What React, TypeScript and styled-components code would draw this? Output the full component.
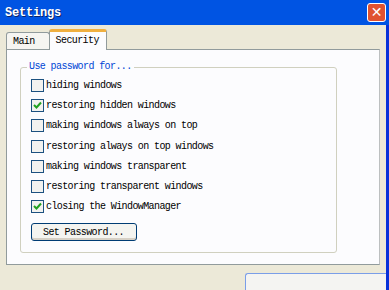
import React from "react";
import styled, { createGlobalStyle } from "styled-components";

const Global = createGlobalStyle`
  html, body { margin: 0; padding: 0; background-color: #ece9d8; }
`;

const Window = styled.div`
  width: 389px;
  height: 290px;
  display: flex;
  flex-direction: column;
  font-family: "Liberation Mono", monospace;
`;

const TitleBar = styled.header`
  height: 25px;
  flex: none;
  display: flex;
  align-items: center;
  justify-content: space-between;
  padding: 0 3px 0 5px;
  box-sizing: border-box;
  background-color: rgb(0, 84, 227);
  color: #ffffff;
`;

const Title = styled.span`
  font-weight: bold;
  font-size: 12px;
  letter-spacing: -0.2px;
  color: #ffffff;
  text-shadow: 1px 1px 0 #0a246a;
`;

const CloseButton = styled.div`
  width: 19px;
  height: 19px;
  border: 1px solid #ffffff;
  border-radius: 3px;
  background-color: rgb(224, 82, 48);
  color: #ffffff;
  font-family: "DejaVu Sans", sans-serif;
  font-size: 14px;
  font-weight: bold;
  line-height: 17px;
  text-align: center;
  box-sizing: border-box;
`;

const Main = styled.div`
  flex: 1;
  display: flex;
  border-right: 3px solid rgb(8, 49, 217);
`;

const Body = styled.div`
  flex: 1;
  display: flex;
  flex-direction: column;
  padding: 3px 0 0 6px;
`;

const TabRow = styled.div`
  display: flex;
  align-items: flex-end;
  height: 21px;
`;

const Tab = styled.div<{ $active?: boolean }>`
  font-size: 10px;
  letter-spacing: -0.6px;
  color: #000;
  box-sizing: border-box;
  display: flex;
  align-items: center;
  border: 1px solid #919b9c;
  border-bottom: none;
  border-radius: 3px 3px 0 0;
  height: ${({ $active }) => ($active ? "21px" : "17px")};
  padding: ${({ $active }) => ($active ? "0 7px 2px 6px" : "0 14px 0 6px")};
  background-color: ${({ $active }) => ($active ? "#fcfcfe" : "#f6f5f1")};
  border-top: ${({ $active }) => ($active ? "3px solid #f0b040" : "1px solid #919b9c")};
  margin-bottom: ${({ $active }) => ($active ? "-1px" : "0")};
  margin-right: ${({ $active }) => ($active ? "0" : "-1px")};
  position: relative;
  z-index: ${({ $active }) => ($active ? 1 : 0)};
`;

const Panel = styled.div`
  width: 374px;
  height: 216px;
  box-sizing: border-box;
  border: 1px solid #919b9c;
  border-right-color: #bcbfc0;
  background-color: #fcfcfe;
  padding: 17px 0 0 13px;
`;

const Group = styled.div`
  position: relative;
  width: 317px;
  height: 186px;
  box-sizing: border-box;
  border: 1px solid #d0d0bf;
  border-radius: 3px;
  padding: 7px 0 0 10px;
  display: flex;
  flex-direction: column;
`;

const Legend = styled.span`
  position: absolute;
  top: -7px;
  left: 6px;
  background-color: #fcfcfe;
  color: #0046d5;
  font-size: 10px;
  line-height: 12px;
  letter-spacing: -0.6px;
  padding: 0 2px;
`;

const Row = styled.div`
  display: flex;
  align-items: center;
  gap: 2px;
  height: 20.3px;
  font-size: 10px;
  letter-spacing: -0.6px;
  color: #000;
`;

const Box = styled.span`
  width: 13px;
  height: 13px;
  box-sizing: border-box;
  border: 1px solid #1c5180;
  background-color: #f2f2ef;
  display: flex;
  align-items: center;
  justify-content: center;
  flex: none;
`;

const Button = styled.div`
  margin-top: 6px;
  width: 106px;
  height: 18px;
  box-sizing: border-box;
  border: 1px solid #003c74;
  border-radius: 3px;
  background-color: #f4f4f0;
  box-shadow: inset 0 -2px 0 #d6d0c5;
  font-size: 10px;
  letter-spacing: -0.6px;
  display: flex;
  align-items: center;
  padding-left: 11px;
`;

const Footer = styled.div`
  flex: 1;
  display: flex;
  justify-content: flex-end;
  padding: 8px 0 0 0;
`;

const OkButton = styled.div`
  width: 140px;
  height: 20px;
  border: 1px solid #7a9ee8;
  border-bottom: none;
  border-right: none;
  border-radius: 3px 0 0 0;
  background-color: #f4f4f2;
`;

const items: [string, boolean][] = [
  ["hiding windows", false],
  ["restoring hidden windows", true],
  ["making windows always on top", false],
  ["restoring always on top windows", false],
  ["making windows transparent", false],
  ["restoring transparent windows", false],
  ["closing the WindowManager", true],
];

const Check = () => (
  <svg width="9" height="9" viewBox="0 0 9 9">
    <path d="M1 4 L3.5 6.5 L8 1.5" stroke="#21a121" strokeWidth="2" fill="none" />
  </svg>
);

export default function App() {
  return (
    <>
      <Global />
      <Window>
        <TitleBar>
          <Title>Settings</Title>
          <CloseButton>✕</CloseButton>
        </TitleBar>
        <Main>
          <Body>
            <TabRow>
              <Tab>Main</Tab>
              <Tab $active>Security</Tab>
            </TabRow>
            <Panel>
              <Group>
                <Legend>Use password for...</Legend>
                {items.map(([label, on]) => (
                  <Row key={label}>
                    <Box>{on && <Check />}</Box>
                    {label}
                  </Row>
                ))}
                <Button>Set Password...</Button>
              </Group>
            </Panel>
            <Footer>
              <OkButton />
            </Footer>
          </Body>
        </Main>
      </Window>
    </>
  );
}
